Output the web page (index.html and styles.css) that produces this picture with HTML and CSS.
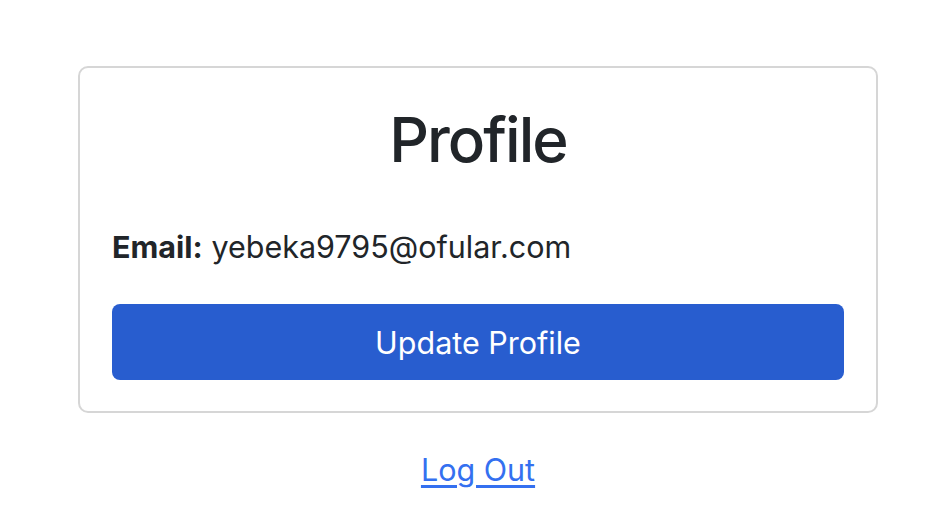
FILE: index.html
```html
<!DOCTYPE html>
<html>
<head>
<meta charset="utf-8">
<link rel="stylesheet" href="styles.css">
</head>
<body>
<main class="page">
  <section class="card">
    <h1 class="title">Profile</h1>
    <p class="email"><strong>Email:</strong> yebeka9795@ofular.com</p>
    <button class="btn" type="button">Update Profile</button>
  </section>
  <div class="logout"><a href="#">Log Out</a></div>
</main>
</body>
</html>
```
FILE: styles.css
```css
html, body {
  margin: 0;
  padding: 0;
  background: #fff;
}
body {
  font-family: Inter, "Noto Sans", sans-serif;
  color: #212529;
}
.page {
  width: 800px;
  margin: 0 0 0 78px;
  padding-top: 66px;
}
.card {
  border: 2px solid #d6d6d6;
  border-radius: 10px;
  padding: 35px 32px 31px;
  display: flex;
  flex-direction: column;
}
.title {
  margin: 0;
  text-align: center;
  font-size: 62px;
  font-weight: 500;
  letter-spacing: -2px;
  line-height: 1.2;
}
.email {
  margin: 47px 0 0;
  font-size: 30.5px;
  line-height: 1.5;
}
.email strong {
  font-weight: 700;
}
.btn {
  margin-top: 34px;
  height: 76px;
  border: none;
  border-radius: 8px;
  background: #285dcf;
  color: #fff;
  font-family: inherit;
  font-size: 30.5px;
  font-weight: 400;
}
.logout {
  text-align: center;
  margin-top: 38px;
}
.logout a {
  color: #3470f0;
  font-size: 30.5px;
  text-decoration: underline;
  text-underline-offset: 4px;
}
```
